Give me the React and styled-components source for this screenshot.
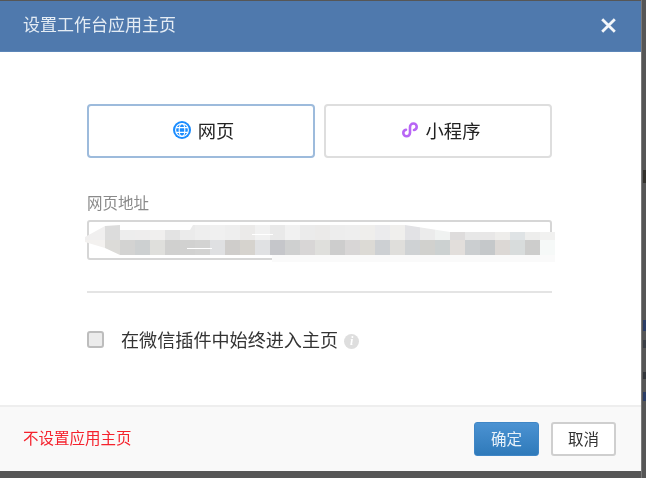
import React from 'react';
import styled, { createGlobalStyle } from 'styled-components';

const Global = createGlobalStyle`
  html, body { margin: 0; padding: 0; background: #565656; }
  * { box-sizing: border-box; }
`;

const Page = styled.div`
  width: 646px; height: 478px; display: flex; align-items: flex-start; overflow: hidden;
  background: #565656;
  font-family: "Liberation Sans", "Noto Sans CJK SC", sans-serif;
`;
const Dialog = styled.div`
  width: 641px; height: 470px; margin-top: 1px; display: flex; flex-direction: column;
  background: #fff; filter: blur(0.3px);
`;
const Header = styled.div`
  height: 51px; flex: none; display: flex; align-items: center; justify-content: space-between;
  padding: 0 25px 0 23px; background: #4f79ad; border-bottom: 1px solid #5c86b8;
`;
const Title = styled.h1`
  margin: 0; font-size: 17px; font-weight: 400; color: #e4ecf4; line-height: 24px;
`;
const CloseIcon = styled.svg`width: 15px; height: 15px; margin-top: -2px; display: block;`;
const Body = styled.div`
  flex: 1; display: flex; flex-direction: column; padding: 52px 89px 0 87px;
`;
const Tabs = styled.div`display: flex; gap: 9px; height: 54px;`;
const Tab = styled.div`
  flex: 1; display: flex; align-items: center; justify-content: center; gap: 7px;
  padding: 0 0 2px 5px;
  border: 2px solid ${p => (p.$active ? '#9dbbdc' : '#dedede')}; border-radius: 4px;
  font-size: 18.3px; color: #222; background: #fff;
`;
const Label = styled.div`
  margin-top: 36px; font-size: 15.5px; line-height: 20px; color: #8a8a8a;
`;
const Field = styled.div`
  position: relative; margin-top: 6px; height: 40px;
  border: 2px solid #d6d6d6; border-radius: 3px; background: #fff;
`;
const Mosaic = styled.div`
  position: absolute; left: -4px; top: 3px; width: 470px; height: 37px;
  display: flex; flex-direction: column;
  clip-path: polygon(0 12px, 20px 1px, 35px 0, 35px 5px, 105px 5px, 108px 0, 320px 0, 365px 7px, 470px 7px, 470px 37px, 187px 37px, 187px 30px, 35px 30px, 20px 23px, 0 17px);
`;
const MosaicRow = styled.div`display: flex; height: 15px; flex: none;`;
const MosaicCell = styled.div`
  flex: none; background: ${p => p.$c};
  width: 15px;
  &:first-child { width: 20px; }
`;
const MosaicFade = styled.div`height: 7px; flex: none; background: #fafafa;`;
const Streak = styled.div`
  position: absolute; z-index: 1; height: 1px; background: #fff;
  left: ${p => p.$x}px; top: ${p => p.$y}px; width: ${p => p.$w}px;
`;
const Rule = styled.div`height: 2px; margin-top: 31px; background: #e4e4e4;`;
const CheckRow = styled.div`display: flex; align-items: center; margin-top: 37px; height: 18px;`;
const Check = styled.span`
  width: 17px; height: 17px; flex: none; border: 2px solid #bdbdbd; border-radius: 3px; background: #ececec;
`;
const CheckText = styled.span`margin-left: 17px; padding-top: 4px; font-size: 18.1px; line-height: 24px; color: #333;`;
const Info = styled.span`
  width: 15px; height: 15px; margin: 5px 0 0 6px; flex: none; border-radius: 50%; background: #dedede;
  display: flex; align-items: center; justify-content: center;
  font: italic 700 12px "Liberation Serif", serif; color: #fff;
`;
const Footer = styled.div`
  height: 66px; flex: none; display: flex; align-items: center; justify-content: space-between;
  padding: 0 25px 0 23px; background: #f9f9f9; border-top: 2px solid #eee;
`;
const DangerLink = styled.span`font-size: 15.5px; color: #f5222d; margin-top: -4px;`;
const Actions = styled.div`display: flex; gap: 12px;`;
const Button = styled.div`
  width: 65px; height: 34px; display: flex; align-items: center; justify-content: center;
  padding-bottom: 2px; font-size: 15.5px; border-radius: 3px;
  ${p => p.$primary
    ? 'background: linear-gradient(#4b92d2, #2f7aba); color: #e8f1f9; border: 1px solid #3f86c6;'
    : 'background: #fff; color: #333; border: 2px solid #cfcfcf;'}
`;
const BackStrip = styled.div`
  flex: 1; align-self: stretch; position: relative; overflow: hidden;
  border-left: 1px solid #7a7a7a; filter: blur(0.4px);
`;
const BackMark = styled.span`
  position: absolute; left: 1px; width: 3px;
  top: ${p => p.$y}px; height: ${p => p.$h}px; background: ${p => p.$c};
`;

const top = ['#f0efef','#dcdcdc','#ededed','#eeeded','#f0efee','#e3e3e3','#ebebeb','#eeeeee','#f0f0f0','#eeeeee','#ebeae9','#f1f1f1','#e9e9e9','#f1f1f1','#ebebeb','#ebeae9','#ededed','#eeeeee','#efeeec','#ebebed','#f0efed','#e2e2e5','#ebebeb','#f0f2f1','#dedcdc','#e7e7e7','#e8e7e7','#eeedeb','#dfe3e5','#ededec','#f1f1f0'];
const bottom = ['#f3f1ef','#dcdbd8','#d3d3d2','#cdd0d1','#dfdfdc','#d0d0cf','#d1d1d0','#d3d3d2','#dfe0e2','#cfcdcb','#d6d3ce','#e0e1e3','#c5c6ca','#cfd0d0','#d8d6d6','#dfdfdc','#cdcdcd','#d8d6d6','#dcdad5','#cdd0d3','#dfdedb','#cfd2d4','#d1d1ce','#ccd1d1','#e2dedb','#cbced0','#c5c8ca','#dcd8d5','#d8dcdc','#cdcdcc','#f6f9f8'];

const Globe = () => (
  <svg width="18" height="18" viewBox="0 0 18 18" fill="none">
    <circle cx="9" cy="9" r="9" fill="#1a8cff" />
    <g stroke="#fff" strokeWidth="1.1">
      <circle cx="9" cy="9" r="6.4" />
      <ellipse cx="9" cy="9" rx="2.8" ry="6.4" />
      <path d="M3 6.6h12M3 11.4h12" />
    </g>
  </svg>
);

const MiniProgram = () => (
  <svg width="18" height="18" viewBox="0 0 18 18" fill="none">
    <path d="M9 7.5v4.2c0 2-1.5 3.6-3.4 3.6-1.8 0-3.3-1.4-3.3-3.2 0-1.6 1.1-3 2.7-3.3M9 10.5V6.1c0-2 1.5-3.6 3.4-3.6 1.8 0 3.3 1.4 3.3 3.2 0 1.6-1.1 3-2.7 3.3" stroke="#b866f5" strokeWidth="2.6" strokeLinecap="round" />
  </svg>
);

export default function App() {
  return (
    <Page>
      <Global />
      <Dialog>
        <Header>
          <Title>设置工作台应用主页</Title>
          <CloseIcon viewBox="0 0 15 15" fill="none">
            <path d="M1.2 1.2l12.6 12.6M13.8 1.2L1.2 13.8" stroke="#f4f7fa" strokeWidth="2.8" />
          </CloseIcon>
        </Header>
        <Body>
          <Tabs>
            <Tab $active><Globe />网页</Tab>
            <Tab><MiniProgram />小程序</Tab>
          </Tabs>
          <Label>网页地址</Label>
          <Field>
            <Mosaic>
              <MosaicRow>{top.map((c, i) => <MosaicCell key={i} $c={c} />)}</MosaicRow>
              <MosaicRow>{bottom.map((c, i) => <MosaicCell key={i} $c={c} />)}</MosaicRow>
              <MosaicFade />
            </Mosaic>
            <Streak $x={163} $y={12} $w={21} />
            <Streak $x={98} $y={26} $w={25} />
          </Field>
          <Rule />
          <CheckRow>
            <Check />
            <CheckText>在微信插件中始终进入主页</CheckText>
            <Info>i</Info>
          </CheckRow>
        </Body>
        <Footer>
          <DangerLink>不设置应用主页</DangerLink>
          <Actions>
            <Button $primary>确定</Button>
            <Button>取消</Button>
          </Actions>
        </Footer>
      </Dialog>
      <BackStrip>
        <BackMark $y={170} $h={13} $c="#33312c" />
        <BackMark $y={320} $h={11} $c="#2b3d66" />
        <BackMark $y={340} $h={8} $c="#3b3f46" />
        <BackMark $y={372} $h={7} $c="#33363b" />
        <BackMark $y={392} $h={9} $c="#2b3d66" />
      </BackStrip>
    </Page>
  );
}
